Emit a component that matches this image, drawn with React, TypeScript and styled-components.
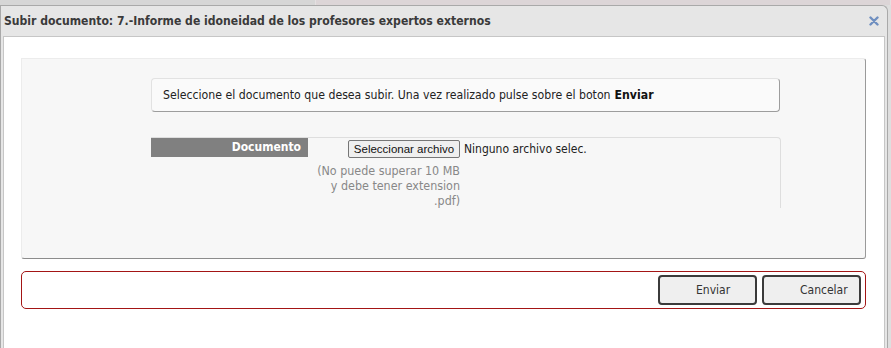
import styled, { createGlobalStyle } from 'styled-components';

const GlobalStyle = createGlobalStyle`
  html, body {
    margin: 0;
    padding: 0;
    background: #dcdcdc;
    overflow: hidden;
  }
  body {
    font-family: 'DejaVu Sans Condensed', 'DejaVu Sans', sans-serif;
  }
`;

const Page = styled.div`
  width: 891px;
  height: 348px;
  display: flex;
  flex-direction: column;
`;

const Backdrop = styled.div`
  display: flex;
  height: 5px;
  flex: none;
`;

const BackdropPart = styled.div<{ $tone: string; $width?: number }>`
  background: ${(p) => p.$tone};
  ${(p) => (p.$width ? `width: ${p.$width}px;` : 'flex: 1;')}
  border-right: 1px solid #e4e0e1;
`;

const Stage = styled.div`
  flex: 1;
  display: flex;
  min-height: 0;
`;

const Dialog = styled.div`
  width: 888px;
  box-sizing: border-box;
  display: flex;
  flex-direction: column;
  background: #e6e6e6;
  border: 1px solid #a9a9a9;
  border-bottom: none;
  border-top-right-radius: 6px;
  padding: 0 2px;
`;

const TitleBar = styled.div`
  height: 30px;
  display: flex;
  align-items: center;
  justify-content: space-between;
  padding: 0 6px 0 1px;
  font-size: 12.1px;
  font-weight: bold;
  color: #3a3a3a;
`;

const CloseButton = styled.button`
  border: none;
  background: none;
  padding: 0;
  display: flex;
  cursor: pointer;
`;

const Content = styled.div`
  flex: 1;
  background: #fff;
  border: 1px solid #c6c6c6;
  border-bottom: none;
  padding: 21px 18px 0 17px;
`;

const Panel = styled.div`
  height: 201px;
  box-sizing: border-box;
  background: #f7f7f7;
  border: 1px solid #ececec;
  border-right-color: #9a9a9a;
  border-bottom-color: #8c8c8c;
  border-radius: 0 3px 3px 3px;
  padding: 19px 0 0 129px;
`;

const Message = styled.div`
  width: 629px;
  height: 34px;
  box-sizing: border-box;
  display: flex;
  align-items: center;
  padding-left: 11px;
  background: #fafafa;
  border: 1px solid #e2e2e2;
  border-right-color: #9d9d9d;
  border-bottom-color: #9d9d9d;
  border-radius: 4px;
  font-size: 12.2px;
  color: #222;

  b {
    margin-left: 4px;
    color: #111;
  }
`;

const FileRow = styled.div`
  margin-top: 25px;
  width: 630px;
  height: 71px;
  box-sizing: border-box;
  display: flex;
  align-items: flex-start;
  border-top: 1px solid #dedede;
  border-right: 1px solid #dedede;
  border-top-right-radius: 4px;
`;

const Label = styled.div`
  width: 157px;
  height: 19px;
  box-sizing: border-box;
  flex: none;
  background: #808080;
  color: #fff;
  font-weight: bold;
  font-size: 12px;
  text-align: right;
  padding: 2px 7px 0 0;
`;

const Field = styled.div`
  width: 152px;
  flex: none;
  display: flex;
  flex-direction: column;
  align-items: flex-end;
  padding-top: 2px;
`;

const Picker = styled.div`
  display: flex;
  align-items: center;
  white-space: nowrap;
  margin-right: -200px;
  width: 312px;
`;

const PickButton = styled.button`
  height: 18px;
  width: 112px;
  flex: none;
  box-sizing: border-box;
  padding: 0;
  background: #efefef;
  border: 1px solid #767676;
  border-radius: 2px;
  font-family: 'Liberation Sans', Arial, sans-serif;
  font-size: 11.5px;
  color: #111;
`;

const FileName = styled.span`
  margin-left: 4px;
  font-size: 12px;
  color: #222;
`;

const Hint = styled.div`
  margin-top: 5px;
  text-align: right;
  font-size: 12.4px;
  line-height: 15px;
  color: #888;
  width: 150px;
`;

const Footer = styled.div`
  margin-top: 12px;
  height: 38px;
  box-sizing: border-box;
  display: flex;
  justify-content: flex-end;
  align-items: center;
  gap: 5px;
  padding-right: 4px;
  border: 1px solid #a31515;
  border-radius: 5px;
`;

const ActionButton = styled.button`
  width: 99px;
  height: 30px;
  box-sizing: border-box;
  text-align: left;
  padding: 0 0 0 36px;
  background: #efefef;
  border: 2px solid #3b3b3b;
  border-radius: 4px;
  font-family: 'DejaVu Sans Condensed', 'DejaVu Sans', sans-serif;
  font-size: 12px;
  color: #333;
`;

const RightGutter = styled.div`
  flex: 1;
  background: #dedede;
`;

const CloseIcon = () => (
  <svg width="10" height="10" viewBox="0 0 10 10">
    <path d="M1.5 1.5 L8.5 8.5 M8.5 1.5 L1.5 8.5" stroke="#6f8fc0" strokeWidth="2.4" strokeLinecap="round" />
  </svg>
);

export default function App() {
  return (
    <>
      <GlobalStyle />
      <Page>
        <Backdrop>
          <BackdropPart $tone="#d6d6d6" $width={315} />
          <BackdropPart $tone="#dcd5d7" />
        </Backdrop>
        <Stage>
          <Dialog>
            <TitleBar>
              <span>Subir documento: 7.-Informe de idoneidad de los profesores expertos externos</span>
              <CloseButton aria-label="Cerrar">
                <CloseIcon />
              </CloseButton>
            </TitleBar>
            <Content>
              <Panel>
                <Message>
                  Seleccione el documento que desea subir. Una vez realizado pulse sobre el boton
                  <b>Enviar</b>
                </Message>
                <FileRow>
                  <Label>Documento</Label>
                  <Field>
                    <Picker>
                      <PickButton>Seleccionar archivo</PickButton>
                      <FileName>Ninguno archivo selec.</FileName>
                    </Picker>
                    <Hint>
                      (No puede superar 10 MB
                      <br />y debe tener extension
                      <br />
                      .pdf)
                    </Hint>
                  </Field>
                </FileRow>
              </Panel>
              <Footer>
                <ActionButton>Enviar</ActionButton>
                <ActionButton>Cancelar</ActionButton>
              </Footer>
            </Content>
          </Dialog>
          <RightGutter />
        </Stage>
      </Page>
    </>
  );
}
